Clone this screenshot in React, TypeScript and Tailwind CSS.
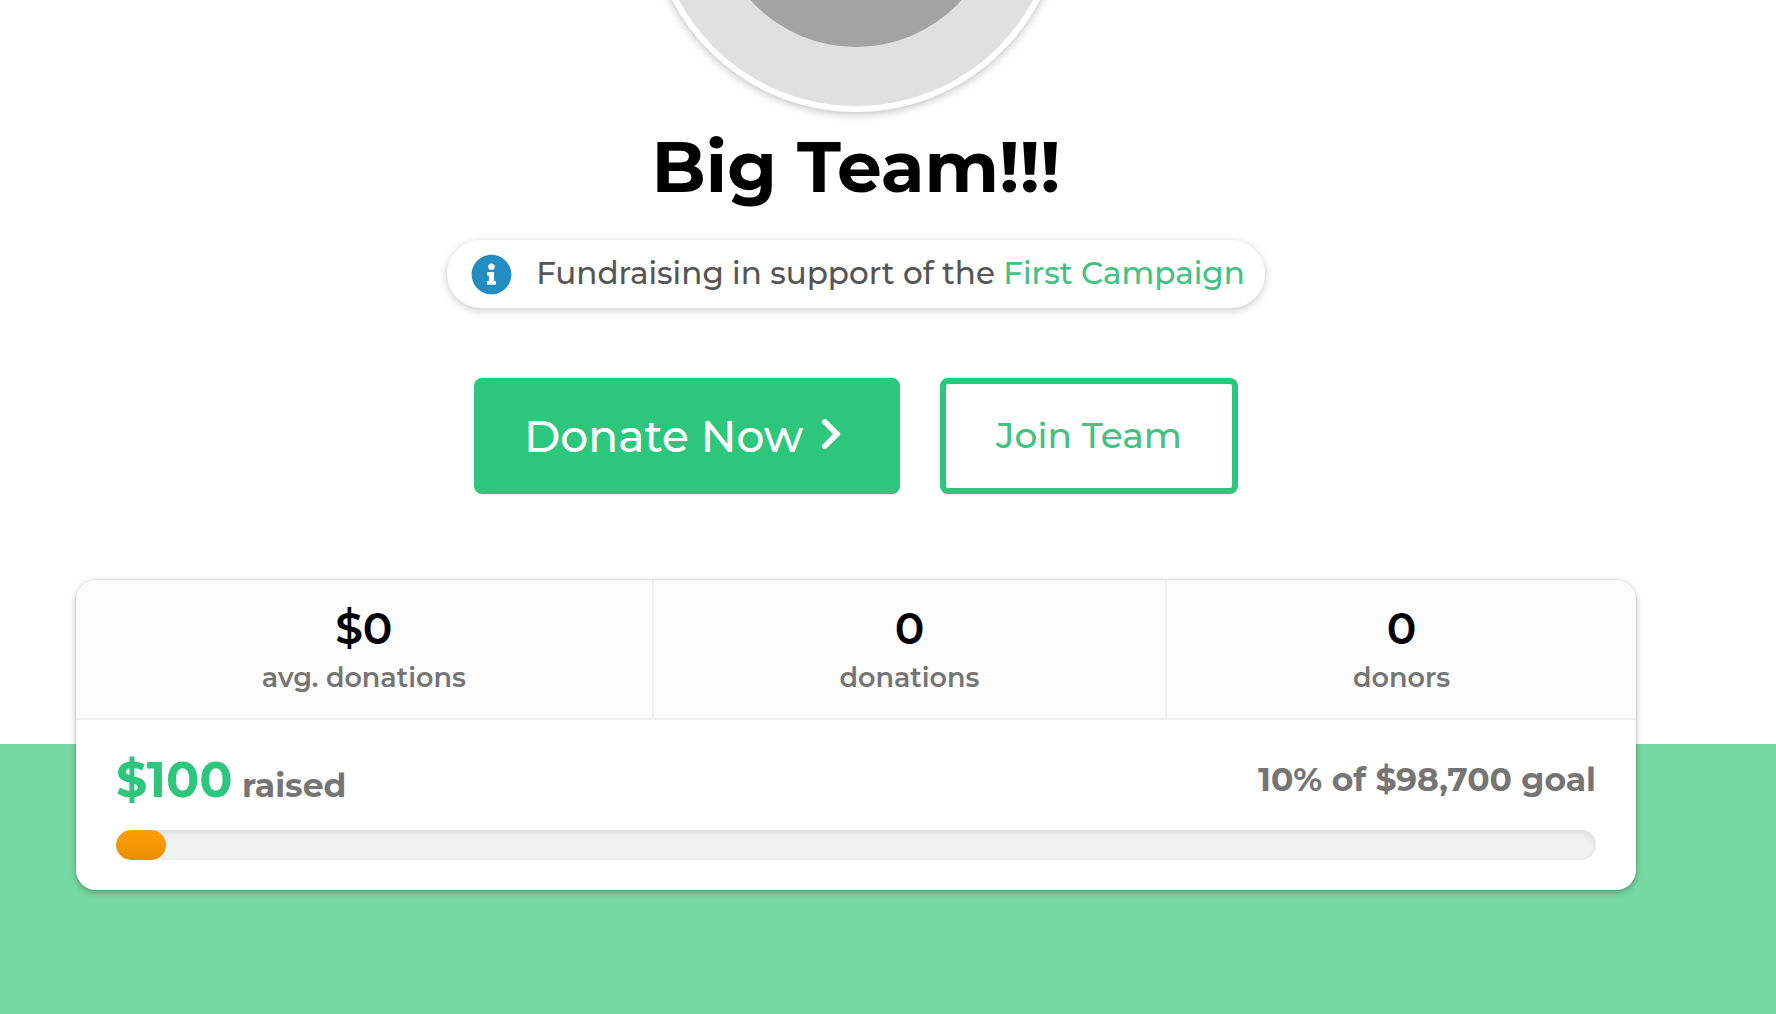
import { FaChevronRight, FaInfoCircle } from "react-icons/fa";

const stats = [
  { label: "avg. donations", value: "$0" },
  { label: "donations", value: "0" },
  { label: "donors", value: "0" },
];

const team = {
  name: "Big Team!!!",
  campaign: "First Campaign",
  raised: "$100",
  goal: "10% of $98,700 goal",
  progress: 3.4,
};

function Avatar() {
  return (
    <div className="-mt-[302px] size-[414px] shrink-0 overflow-hidden rounded-full border-6 border-white bg-[#e0e0e0] shadow-[0_2px_8px_rgba(0,0,0,0.25)]">
      <svg viewBox="0 0 402 402" className="h-full w-full" aria-hidden="true">
        <circle cx="201" cy="201" r="142" fill="#a3a3a3" />
      </svg>
    </div>
  );
}

function StatsCard() {
  return (
    <div className="-mt-[164px] w-full overflow-hidden rounded-[20px] bg-white shadow-[0_0_0_1px_rgba(0,0,0,0.03),0_2px_6px_rgba(0,0,0,0.3)]">
      <dl className="flex border-b-2 border-[#f0f0f0] bg-[#fcfcfc]">
        {stats.map((stat) => (
          <div
            key={stat.label}
            className="flex flex-auto flex-col-reverse items-center gap-1 border-r-2 border-[#f0f0f0] pt-[22px] pb-5 last:border-r-0"
          >
            <dt className="text-[27px] leading-10 font-semibold text-[#757575]">{stat.label}</dt>
            <dd className="text-[44px] leading-[52px] font-semibold text-black">{stat.value}</dd>
          </div>
        ))}
      </dl>

      <div className="px-10 pt-[30px] pb-[30px]">
        <div className="flex h-20 items-start justify-between text-[33px] font-bold text-[#757575]">
          <p className="leading-[60px]">
            <span className="text-[49px] text-[#2cc77d]">{team.raised}</span> {"raised"}
          </p>
          <p className="leading-[58px]">{team.goal}</p>
        </div>
        <div
          role="progressbar"
          aria-label="Raised so far"
          aria-valuenow={team.progress}
          className="h-[30px] overflow-hidden rounded-full bg-[#f0f0f0] shadow-[inset_0_2px_6px_rgba(0,0,0,0.1)]"
        >
          <div
            className="h-full rounded-full bg-linear-to-b from-[#ffa006] to-[#e88f00]"
            style={{ width: `${team.progress}%` }}
          />
        </div>
      </div>
    </div>
  );
}

export default function App() {
  return (
    <div className="flex min-h-screen flex-col overflow-hidden bg-white font-['Montserrat','Inter',sans-serif]">
      <header className="flex flex-col items-center pr-16 pb-[250px]">
        <Avatar />
        <h1 className="mt-2 text-[71px] leading-[94px] font-bold text-black">{team.name}</h1>

        <div className="mt-[26px] flex h-[68px] items-center gap-6 rounded-full bg-white pr-5 pl-6 shadow-[0_2px_8px_rgba(0,0,0,0.22)]">
          <FaInfoCircle className="size-[41px] text-[#238dc1]" />
          <p className="pb-0.5 text-[31px] leading-10 font-medium text-[#555555]">
            Fundraising in support of the{" "}
            <a href="#campaign" className="text-[#41c182]">
              {team.campaign}
            </a>
          </p>
        </div>

        <div className="mt-[70px] flex gap-10">
          <button
            type="button"
            className="flex h-[116px] w-[426px] items-center gap-4 rounded-lg bg-[#2cc77d] pl-[50px] text-[44px] font-medium text-white"
          >
            Donate Now
            <FaChevronRight className="mb-1 h-9 w-6" />
          </button>
          <button
            type="button"
            className="h-[116px] w-[298px] rounded-lg border-6 border-[#2cc77d] pb-0.5 text-[36px] font-medium text-[#41c182]"
          >
            Join Team
          </button>
        </div>
      </header>

      <section className="flex grow items-start bg-[#77d9a2] pr-[140px] pb-[124px] pl-[76px]">
        <StatsCard />
      </section>
    </div>
  );
}
